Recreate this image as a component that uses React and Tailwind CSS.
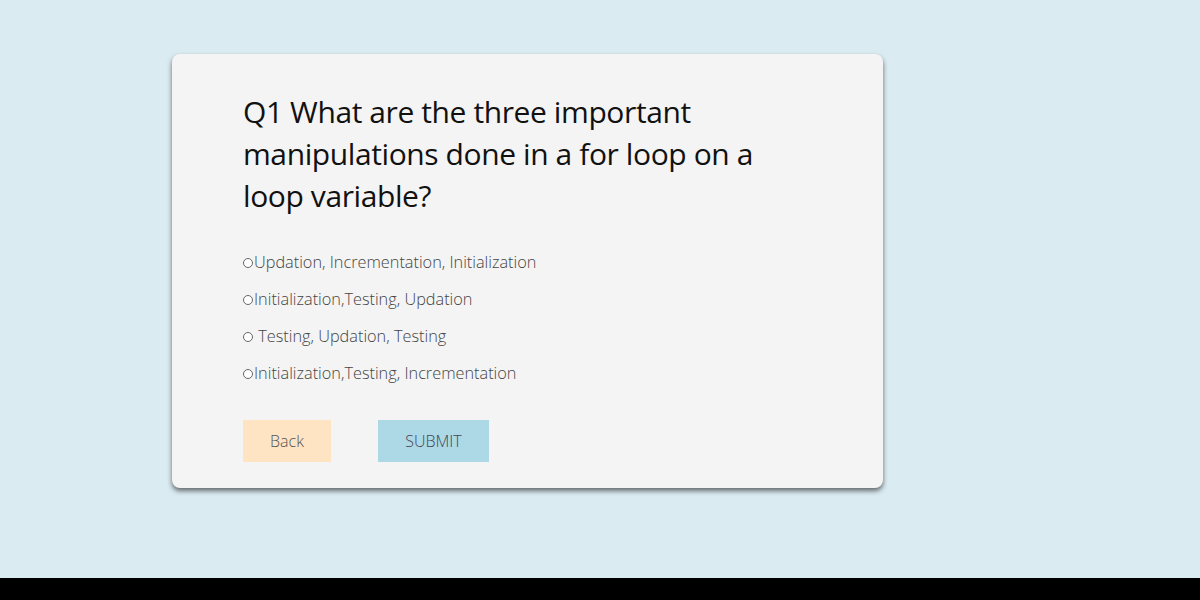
export default function App() {
  const options = [
    'Updation, Incrementation, Initialization',
    'Initialization,Testing, Updation',
    ' Testing, Updation, Testing',
    'Initialization,Testing, Incrementation',
  ]
  return (
    <div className="w-[1200px] h-[600px] flex flex-col bg-black" style={{ fontFamily: '"Open Sans", sans-serif' }}>
      <div className="h-[578px] bg-[#dbebf2] pt-[54px] pl-[172px]">
        <div className="w-[711px] h-[434px] bg-[#f4f4f4] rounded-lg shadow-[0_3px_5px_rgba(0,0,0,0.55)] pl-[71px] pt-[37px]">
          <h1 className="text-[30px] leading-[42px] text-[#111] w-[560px] tracking-[-0.4px]">
            Q1 What are the three important manipulations done in a for loop on a loop variable?
          </h1>
          <div className="mt-[27px] flex flex-col">
            {options.map((o, i) => (
              <label key={i} className="h-[37px] flex items-center text-[16.3px] font-light text-[#444] whitespace-pre">
                <span className="w-[10px] h-[10px] rounded-full border border-[#666] mr-[1px] bg-white" />
                {o}
              </label>
            ))}
          </div>
          <div className="mt-[28px] flex gap-[47px]">
            <button className="w-[88px] h-[42px] bg-[#ffe4c4] text-[#555] text-[16px] font-light">Back</button>
            <button className="w-[111px] h-[42px] bg-[#add8e6] text-[#445] text-[16px] font-light">SUBMIT</button>
          </div>
        </div>
      </div>
    </div>
  )
}
